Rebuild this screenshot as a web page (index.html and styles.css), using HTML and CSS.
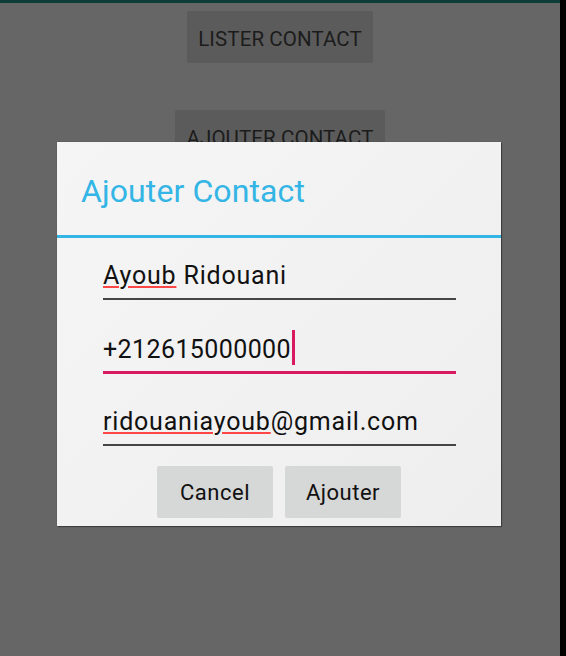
FILE: index.html
```html
<!DOCTYPE html>
<html>
<head>
<meta charset="utf-8">
<link rel="stylesheet" href="styles.css">
</head>
<body>
<div class="screen">
  <div class="app">
    <div class="topbar"></div>
    <div class="content">
      <div class="btn btn-list">LISTER CONTACT</div>
      <div class="btn btn-add">AJOUTER CONTACT</div>
    </div>
    <div class="dialog">
      <div class="dialog-title">Ajouter Contact</div>
      <div class="dialog-divider"></div>
      <div class="fields">
        <div class="field field-name"><span class="spell">Ayoub</span> Ridouani</div>
        <div class="field field-phone focused">+212615000000<span class="cursor"></span></div>
        <div class="field field-mail"><span class="spell">ridouaniayoub</span>@gmail.com</div>
      </div>
      <div class="actions">
        <div class="dbtn">Cancel</div>
        <div class="dbtn">Ajouter</div>
      </div>
    </div>
  </div>
  <div class="edge"></div>
</div>
</body>
</html>
```

FILE: styles.css
```css
html, body {
  margin: 0;
  padding: 0;
}
body {
  width: 566px;
  height: 656px;
  overflow: hidden;
  font-family: Roboto, "Noto Sans", sans-serif;
  background: #000;
}
.screen {
  display: flex;
  width: 566px;
  height: 656px;
}
.app {
  position: relative;
  width: 560px;
  height: 656px;
  background: #666666;
}
.edge {
  width: 6px;
  background: #000;
}
.topbar {
  height: 3px;
  background: #0d3d37;
}
.content {
  display: flex;
  flex-direction: column;
  align-items: center;
  padding-top: 8px;
  gap: 47px;
}
.btn {
  height: 52px;
  box-sizing: border-box;
  padding-top: 3px;
  background: #5b5b5b;
  color: #1c1c1c;
  font-size: 20.5px;
  letter-spacing: 0.1px;
  display: flex;
  align-items: center;
  justify-content: center;
  border-radius: 2px;
}
.btn-list {
  width: 186px;
}
.btn-add {
  width: 210px;
}
.dialog {
  position: absolute;
  left: 57px;
  top: 142px;
  width: 444px;
  height: 384px;
  background: linear-gradient(135deg, #f5f5f5 0%, #f1f1f1 60%, #eeeeee 100%);
  box-shadow: 1px 1px 1px rgba(0,0,0,0.35), 0 0 1px rgba(0,0,0,0.3);
}
.dialog-title {
  height: 93px;
  box-sizing: border-box;
  padding-left: 24px;
  padding-top: 30px;
  font-size: 32px;
  line-height: 38px;
  color: #33b5e5;
  letter-spacing: 0.1px;
}
.dialog-divider {
  height: 3px;
  background: #33b5e5;
}
.fields {
  margin: 0 45px 0 46px;
  display: flex;
  flex-direction: column;
}
.field {
  font-size: 25px;
  line-height: 30px;
  height: 30px;
  color: #111;
  letter-spacing: 0.8px;
  padding-bottom: 7px;
  border-bottom: 2px solid #454545;
  white-space: nowrap;
}
.field-name {
  margin-top: 23px;
}
.field-phone {
  margin-top: 35px;
  letter-spacing: 0.4px;
}
.field-mail {
  margin-top: 33px;
}
.field.focused {
  border-bottom: 3px solid #d81b60;
  padding-bottom: 6px;
}
.spell {
  text-decoration: underline;
  text-decoration-color: #ff4646;
  text-decoration-thickness: 2px;
  text-underline-offset: 2px;
}
.cursor {
  display: inline-block;
  width: 3px;
  height: 30px;
  vertical-align: top;
  background: #d81b60;
  box-shadow: 0 -5px 0 #d81b60;
  margin-left: 1px;
}
.actions {
  display: flex;
  justify-content: center;
  gap: 12px;
  margin-top: 20px;
}
.dbtn {
  width: 116px;
  height: 52px;
  background: #d6d7d7;
  border-radius: 2px;
  display: flex;
  align-items: center;
  justify-content: center;
  font-size: 22px;
  color: #111;
  letter-spacing: 0.5px;
}
```
